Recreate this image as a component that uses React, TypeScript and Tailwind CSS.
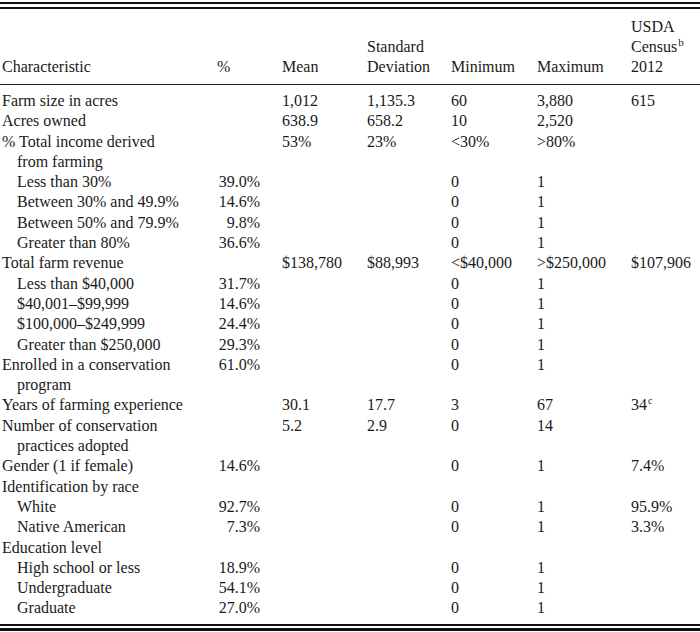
type Row = {
  label: string[];
  indent?: boolean;
  pct?: string;
  mean?: string;
  sd?: string;
  min?: string;
  max?: string;
  usda?: React.ReactNode;
};

const rows: Row[] = [
  { label: ["Farm size in acres"], mean: "1,012", sd: "1,135.3", min: "60", max: "3,880", usda: "615" },
  { label: ["Acres owned"], mean: "638.9", sd: "658.2", min: "10", max: "2,520" },
  { label: ["% Total income derived", "from farming"], mean: "53%", sd: "23%", min: "<30%", max: ">80%" },
  { label: ["Less than 30%"], indent: true, pct: "39.0%", min: "0", max: "1" },
  { label: ["Between 30% and 49.9%"], indent: true, pct: "14.6%", min: "0", max: "1" },
  { label: ["Between 50% and 79.9%"], indent: true, pct: "9.8%", min: "0", max: "1" },
  { label: ["Greater than 80%"], indent: true, pct: "36.6%", min: "0", max: "1" },
  { label: ["Total farm revenue"], mean: "$138,780", sd: "$88,993", min: "<$40,000", max: ">$250,000", usda: "$107,906" },
  { label: ["Less than $40,000"], indent: true, pct: "31.7%", min: "0", max: "1" },
  { label: ["$40,001–$99,999"], indent: true, pct: "14.6%", min: "0", max: "1" },
  { label: ["$100,000–$249,999"], indent: true, pct: "24.4%", min: "0", max: "1" },
  { label: ["Greater than $250,000"], indent: true, pct: "29.3%", min: "0", max: "1" },
  { label: ["Enrolled in a conservation", "program"], pct: "61.0%", min: "0", max: "1" },
  {
    label: ["Years of farming experience"],
    mean: "30.1",
    sd: "17.7",
    min: "3",
    max: "67",
    usda: (
      <>
        34<sup className="text-[10px] relative -top-[6px] pl-[1px]">c</sup>
      </>
    ),
  },
  { label: ["Number of conservation", "practices adopted"], mean: "5.2", sd: "2.9", min: "0", max: "14" },
  { label: ["Gender (1 if female)"], pct: "14.6%", min: "0", max: "1", usda: "7.4%" },
  { label: ["Identification by race"] },
  { label: ["White"], indent: true, pct: "92.7%", min: "0", max: "1", usda: "95.9%" },
  { label: ["Native American"], indent: true, pct: "7.3%", min: "0", max: "1", usda: "3.3%" },
  { label: ["Education level"] },
  { label: ["High school or less"], indent: true, pct: "18.9%", min: "0", max: "1" },
  { label: ["Undergraduate"], indent: true, pct: "54.1%", min: "0", max: "1" },
  { label: ["Graduate"], indent: true, pct: "27.0%", min: "0", max: "1" },
];

// column edges: 2 | 214 | 262 | 367 | 451 | 537 | 631
const cols = "grid grid-cols-[212px_48px_105px_84px_86px_94px_1fr]";

export default function App() {
  return (
    <div
      className="w-[700px] h-[632px] bg-white text-[#1a1a1a] text-[16px] pt-[2px]"
      style={{ fontFamily: '"Liberation Serif", "Times New Roman", serif' }}
    >
      <div className="h-[2px] bg-[#111]" />
      <div className="h-[2px] bg-[#111] mt-[3px]" />

      {/* header */}
      <div className={`${cols} items-end pl-[2px] pt-[8px] pb-[7px] leading-[20px] border-b border-[#222]`}>
        <div>Characteristic</div>
        <div className="pl-[3px]">%</div>
        <div className="pl-[20px]">Mean</div>
        <div>
          Standard
          <br />
          Deviation
        </div>
        <div>Minimum</div>
        <div>Maximum</div>
        <div>
          USDA
          <br />
          Census<sup className="text-[11px] relative -top-[6px] pl-[1px]">b</sup>
          <br />
          2012
        </div>
      </div>

      {/* body */}
      <div className="pt-[6px] pl-[2px] leading-[20.3px]">
        {rows.map((r, i) => (
          <div key={i} className={cols}>
            <div className={r.indent ? "pl-[15px]" : ""}>
              {r.label.map((l, j) => (
                <div key={j} className={j > 0 ? "pl-[15px]" : ""}>
                  {l}
                </div>
              ))}
            </div>
            <div className="text-right pr-[2px]">{r.pct}</div>
            <div className="pl-[20px]">{r.mean}</div>
            <div>{r.sd}</div>
            <div>{r.min}</div>
            <div>{r.max}</div>
            <div>{r.usda}</div>
          </div>
        ))}
      </div>

      <div className="h-[2px] bg-[#111] mt-[5px]" />
      <div className="h-[3px] bg-[#111] mt-[2px]" />
    </div>
  );
}
